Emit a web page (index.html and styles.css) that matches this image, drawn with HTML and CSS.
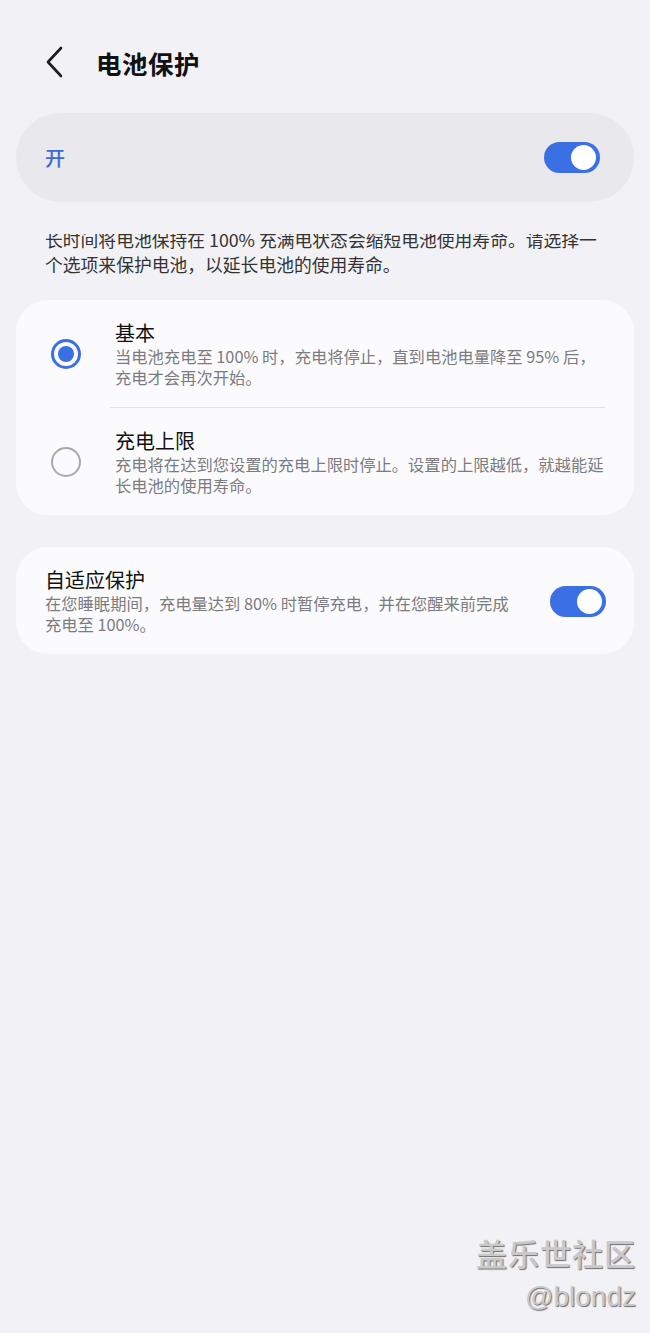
FILE: index.html
```html
<!DOCTYPE html>
<html lang="zh-CN">
<head>
    <meta charset="UTF-8">
    <meta name="viewport" content="width=device-width, initial-scale=1.0">
    <title>电池保护</title>
    <link rel="stylesheet" href="styles.css">
</head>
<body>

    <!-- Header -->
    <div class="header">
        <svg class="back-icon" width="20" height="32" viewBox="0 0 20 32">
            <polyline points="16,2 3,16 16,30" fill="none" stroke="#1c1c1c" stroke-width="2.6" stroke-linecap="round" stroke-linejoin="round"/>
        </svg>
        <h1>电池保护</h1>
    </div>

    <!-- Master switch -->
    <div class="master-card">
        <span class="master-label">开</span>
        <span class="switch on"><span class="knob"></span></span>
    </div>

    <p class="intro">长时间将电池保持在 100% 充满电状态会缩短电池使用寿命。请选择一个选项来保护电池，以延长电池的使用寿命。</p>

    <!-- Options -->
    <div class="card">
        <div class="option">
            <span class="radio checked"></span>
            <div class="option-text">
                <div class="title">基本</div>
                <div class="desc">当电池充电至 100% 时，充电将停止，直到电池电量降至 95% 后，充电才会再次开始。</div>
            </div>
        </div>
        <div class="divider"></div>
        <div class="option">
            <span class="radio"></span>
            <div class="option-text">
                <div class="title">充电上限</div>
                <div class="desc">充电将在达到您设置的充电上限时停止。设置的上限越低，就越能延长电池的使用寿命。</div>
            </div>
        </div>
    </div>

    <div class="card adaptive">
        <div class="adaptive-text">
            <div class="title">自适应保护</div>
            <div class="desc">在您睡眠期间，充电量达到 80% 时暂停充电，并在您醒来前完成充电至 100%。</div>
        </div>
        <span class="switch on"><span class="knob"></span></span>
    </div>

    <!-- Watermark -->
    <div class="watermark">
        <div class="wm-cn">盖乐世社区</div>
        <div class="wm-user">@blondz</div>
    </div>

</body>
</html>
```

FILE: styles.css
```css
body {
    font-family: "Noto Sans CJK SC", "Noto Sans", sans-serif;
    background-color: #f2f2f6;
    margin: 0;
    padding: 0;
    width: 650px;
    height: 1333px;
    position: relative;
    overflow: hidden;
    color: #111;
}

.header {
    display: flex;
    align-items: center;
    height: 64px;
    margin-top: 30px;
    padding-left: 45px;
}
.back-icon {
    display: block;
}
h1 {
    margin: 0 0 0 31px;
    font-size: 25.5px;
    font-weight: 700;
    color: #111;
    letter-spacing: 0.5px;
}

.master-card {
    display: flex;
    align-items: center;
    justify-content: space-between;
    height: 89px;
    margin: 19px 16px 0;
    padding: 0 34px 0 29px;
    background-color: #e8e8ed;
    border-radius: 45px;
}
.master-label {
    font-size: 20px;
    font-weight: 500;
    color: #3a6ad4;
}

.switch {
    position: relative;
    display: inline-block;
    width: 56px;
    height: 31px;
    border-radius: 16px;
    background-color: #bbb;
    flex-shrink: 0;
}
.switch.on {
    background-color: #3b6fe4;
}
.switch .knob {
    position: absolute;
    top: 3px;
    left: 4px;
    width: 25px;
    height: 25px;
    border-radius: 50%;
    background-color: #fff;
}
.switch.on .knob {
    left: auto;
    right: 4px;
}

.intro {
    margin: 25px 16px 0;
    padding: 0 30px 0 29px;
    font-size: 17.8px;
    line-height: 25px;
    color: #333;
    clip-path: inset(7px 0 0 0);
}

.card {
    margin: 23px 16px 0;
    background-color: #fbfbfd;
    border-radius: 32px;
}

.option {
    display: flex;
    align-items: center;
    padding: 20px 26px 19px 35px;
}
.radio {
    width: 30px;
    height: 30px;
    box-sizing: border-box;
    border: 2px solid #a9a9ad;
    border-radius: 50%;
    flex-shrink: 0;
    position: relative;
    margin-right: 34px;
}
.radio.checked {
    border: 3px solid #3b6fe4;
}
.radio.checked::after {
    content: "";
    position: absolute;
    top: 4px;
    left: 4px;
    width: 16px;
    height: 16px;
    border-radius: 50%;
    background-color: #3b6fe4;
}

.title {
    font-size: 20px;
    line-height: 26px;
    color: #111;
}
.desc {
    font-size: 16.3px;
    line-height: 21px;
    color: #7b7b80;
}

.divider {
    height: 1px;
    margin: 0 29px 0 94px;
    background-color: #e2e2e6;
}

.adaptive {
    display: flex;
    align-items: center;
    margin-top: 32px;
    padding: 20px 28px 19px 29px;
}
.adaptive-text {
    flex: 1;
    padding-right: 36px;
}

/* Watermark overlay */
.watermark {
    position: absolute;
    right: 14px;
    bottom: 18px;
    text-align: right;
    color: #c9c9cc;
    text-shadow: 1px 1px 1px #6f6f72;
}
.wm-cn {
    font-size: 31px;
    line-height: 40px;
    font-weight: 500;
    letter-spacing: 1px;
}
.wm-user {
    font-family: "Liberation Sans", "Noto Sans", sans-serif;
    font-size: 28px;
    line-height: 36px;
    margin-top: 6px;
}
```
